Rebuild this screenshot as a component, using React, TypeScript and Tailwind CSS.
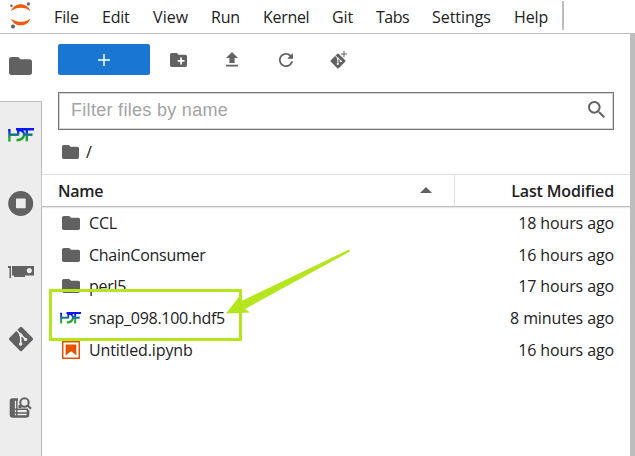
import React from 'react';

const menus = [
  { label: 'File', box: 'w-[48px]', text: 'tracking-[-0.1px]' },
  { label: 'Edit', box: 'w-[51px]', text: 'tracking-[-0.2px]' },
  { label: 'View', box: 'w-[58px]', text: 'tracking-[0.1px]' },
  { label: 'Run', box: 'w-[52px]', text: 'tracking-[-0.2px]' },
  { label: 'Kernel', box: 'w-[69px]', text: 'tracking-[-0.3px]' },
  { label: 'Git', box: 'w-[44px]', text: 'tracking-[-0.1px]' },
  { label: 'Tabs', box: 'w-[56px]', text: 'tracking-[-0.5px]' },
  { label: 'Settings', box: 'w-[82px]', text: 'tracking-[-0.05px]' },
  { label: 'Help', box: 'w-[48px]', text: 'tracking-[-0.1px]' },
];

const files = [
  { name: 'CCL', time: '18 hours ago', kind: 'folder', text: 'tracking-[-0.2px]' },
  { name: 'ChainConsumer', time: '16 hours ago', kind: 'folder', text: 'tracking-[-0.26px]' },
  { name: 'perl5', time: '17 hours ago', kind: 'folder', text: 'tracking-[-0.3px]' },
  { name: 'snap_098.100.hdf5', time: '8 minutes ago', kind: 'hdf', text: 'tracking-[-0.27px]' },
  { name: 'Untitled.ipynb', time: '16 hours ago', kind: 'notebook', text: 'tracking-[-0.12px]' },
];

function Folder({ className }: { className: string }) {
  return (
    <svg viewBox="2 4 20 16" preserveAspectRatio="none" className={className} fill="#616161">
      <path d="M10 4H4c-1.1 0-1.99.9-1.99 2L2 18c0 1.1.9 2 2 2h16c1.1 0 2-.9 2-2V8c0-1.1-.9-2-2-2h-8l-2-2z" />
    </svg>
  );
}

function Hdf({ className, id }: { className: string; id: string }) {
  return (
    <svg viewBox="0 0 26 14" preserveAspectRatio="none" className={className} fill="none" stroke={`url(#${id})`} strokeWidth="2.4">
      <defs>
        <linearGradient id={id} gradientUnits="userSpaceOnUse" x1="0" y1="0" x2="0" y2="14">
          <stop offset="0.15" stopColor="#0a14ff" />
          <stop offset="0.55" stopColor="#1b8a70" />
          <stop offset="0.8" stopColor="#22aa22" />
        </linearGradient>
      </defs>
      <path d="M1.4 1v12.500M1 6.800h9.500M10.200 1v6.500M8 1.200h18M10 2c4.500.200 6.300 2.200 6 5-.400 3-2.500 5-7.500 5.200M18.800 1.500V13.300M17 6.800h7.500" />
    </svg>
  );
}

function Git({ className, gap }: { className: string; gap: string }) {
  return (
    <svg viewBox="0 0 26 26" className={className}>
      <rect x="4" y="4" width="18" height="18" rx="1.500" transform="rotate(45 13 13)" fill="#616161" />
      <path d="M8.500 4l4.200 4.500V18M12.800 8.500l5 5" stroke={gap} strokeWidth="1.600" fill="none" />
      <circle cx="12.700" cy="9" r="1.700" fill={gap} />
      <circle cx="12.700" cy="18" r="1.700" fill={gap} />
      <circle cx="17.500" cy="13.400" r="1.700" fill={gap} />
    </svg>
  );
}

function Notebook() {
  return (
    <svg viewBox="1.800 1.800 18.400 18.400" className="h-[18px] w-[18px]" fill="#e65100">
      <path d="M18.700 3.300v15.400H3.300V3.300h15.400m1.500-1.500H1.800v18.400h18.400z" />
      <path d="M16.500 16.500l-5.400-4.300-5.600 4.300v-11h11z" />
    </svg>
  );
}

export default function App() {
  return (
    <div className="relative flex h-[456px] w-[635px] flex-col overflow-hidden bg-white font-['Open_Sans','Noto_Sans',sans-serif] text-[16px] text-[#212121]">
      <header className="flex h-[34px] shrink-0 border-b border-[#bdbdbd]">
        <div className="w-[54px] shrink-0">
          <svg width="40" height="33" viewBox="0 0 40 33">
            <path d="M11 11.200C14 2 27.500 2 30.500 11.200 25 6.600 16.500 6.600 11 11.200z" fill="#f05a0a" />
            <path d="M11 18.400C14 27.600 27.500 27.600 30.500 18.400 25 23 16.500 23 11 18.400z" fill="#f05a0a" />
            <circle cx="11.400" cy="5.800" r="1.200" fill="#616161" />
            <circle cx="28.400" cy="3.900" r="1.600" fill="#616161" />
            <circle cx="13" cy="26.600" r="2" fill="#616161" />
          </svg>
        </div>
        {menus.map((m) => (
          <div key={m.label} className={`${m.box} shrink-0 pt-[5px] leading-6`}>
            <span className={m.text}>{m.label}</span>
          </div>
        ))}
        <div className="mt-px h-[29px] w-[2px] bg-[#bdbdbd]" />
      </header>

      <div className="flex min-h-0 flex-1">
        <aside className="flex w-[42px] shrink-0 flex-col">
          <div className="flex h-[67px] shrink-0 items-center pl-[9px]">
            <Folder className="mt-[-3px] h-[18px] w-[23px]" />
          </div>
          <div className="flex flex-1 flex-col border-t border-r border-[#bdbdbd] bg-[#ededed]">
            <div className="flex h-[67px] items-center pl-2">
              <Hdf className="mt-[-2px] h-[14px] w-[26px]" id="hdf-side" />
            </div>
            <div className="flex h-[68px] items-center pl-2">
              <svg width="26" height="26" viewBox="0 0 26 26" className="mt-[2px]">
                <circle cx="12.700" cy="12.500" r="12.500" fill="#616161" />
                <rect x="8" y="7.500" width="9.700" height="9.700" rx="0.600" fill="#ededed" />
              </svg>
            </div>
            <div className="flex h-[68px] items-center pl-2">
              <svg width="26" height="14" viewBox="0 0 26 14" className="mt-[2px]" fill="#616161">
                <path d="M0 1h3v12H1.500V3H0z" />
                <path fillRule="evenodd" d="M4 1h22v9.500H17V12H6v-1.500H4zM21.300 3a2.600 2.600 0 1 0 .01 0z" />
              </svg>
            </div>
            <div className="flex h-[68px] items-center pl-2">
              <Git className="h-[26px] w-[26px]" gap="#ededed" />
            </div>
            <div className="flex h-[68px] items-center pl-[9px]">
              <svg width="24" height="22" viewBox="0 0 24 22" fill="none" stroke="#616161" className="mt-[2px]">
                <path d="M9 2.500H3.500Q2 2.500 2 4V17.500Q2 19.500 4 19.500H17Q19 19.500 19 17.500V13" strokeWidth="2.600" />
                <path d="M4.500 3v16M9.500 9.500h3" strokeWidth="2.800" />
                <path d="M7.800 2v17M6 12.200h13M6 16h13" strokeWidth="1.400" />
                <circle cx="15.500" cy="5.500" r="4.200" strokeWidth="2" />
                <path d="M18.400 8.300l3.600 3.500" strokeWidth="2.200" />
              </svg>
            </div>
          </div>
        </aside>

        <main className="flex min-w-0 flex-1 flex-col">
          <div className="flex h-[58px] shrink-0 items-start pt-[10px] pl-4">
            <button className="flex h-[31px] w-[92px] items-center justify-center rounded-[2px] bg-[#1976d2]">
              <svg width="12" height="12" viewBox="0 0 12 12" stroke="#fff" strokeWidth="1.500"><path d="M6 0v12M0 6h12" /></svg>
            </button>
            <div className="flex h-[31px] w-[56px] items-center justify-center">
              <svg width="17" height="14" viewBox="2 4 20 16" preserveAspectRatio="none" fill="#616161">
                <path d="M20 6h-8l-2-2H4c-1.110 0-1.990.890-1.990 2L2 18c0 1.110.890 2 2 2h16c1.110 0 2-.890 2-2V8c0-1.110-.890-2-2-2zm-1 8h-3v3h-2v-3h-3v-2h3V9h2v3h3v2z" />
              </svg>
            </div>
            <div className="flex h-[31px] w-[52px] items-center justify-center">
              <svg width="12" height="14.500" viewBox="5 3 14 17" preserveAspectRatio="none" fill="#616161">
                <path d="M9 16h6v-6h4l-7-7-7 7h4zM5 18h14v2H5z" />
              </svg>
            </div>
            <div className="flex h-[31px] w-[56px] items-center justify-center">
              <svg width="14" height="14" viewBox="3 3 12 12" fill="#616161">
                <path d="M9 13.500c-2.490 0-4.500-2.010-4.500-4.500S6.510 4.500 9 4.500c1.240 0 2.360.520 3.170 1.330L10 8h5V3l-1.760 1.760C12.150 3.680 10.660 3 9 3 5.690 3 3.010 5.690 3.010 9S5.690 15 9 15c2.970 0 5.430-2.160 5.900-5h-1.520c-.460 2-2.240 3.500-4.380 3.500z" />
              </svg>
            </div>
            <div className="flex h-[31px] w-[50px] items-center justify-center">
              <div className="relative mt-[3px] mr-[3px]">
                <Git className="h-[16px] w-[16px]" gap="#ffffff" />
                <svg width="6" height="6" viewBox="0 0 6 6" stroke="#616161" className="absolute -top-[2px] left-[11px]"><path d="M3 0v6M0 3h6" /></svg>
              </div>
            </div>
          </div>

          <div className="mr-[16px] ml-4 flex h-[38px] shrink-0 items-center justify-between border border-[#757575] pr-[8px] pl-[12px] shadow-[inset_0_0_0_1px_#d5d5d5]">
            <span className="mt-[-2px] font-['Liberation_Sans',Arial,sans-serif] text-[18px] tracking-[0.3px] text-[#a3a3a3]">Filter files by name</span>
            <svg width="17" height="17" viewBox="3 3 17.500 17.500" fill="#616161" className="mt-[-3px]">
              <path d="M15.500 14h-.790l-.280-.270A6.471 6.471 0 0 0 16 9.500 6.500 6.500 0 1 0 9.500 16c1.610 0 3.090-.590 4.230-1.570l.270.280v.790l5 4.990L20.490 19l-4.990-5zm-6 0C7.010 14 5 11.990 5 9.500S7.010 5 9.500 5 14 7.010 14 9.500 11.990 14 9.500 14z" />
            </svg>
          </div>
          <div className="flex h-[44px] shrink-0 items-center pl-[20px]">
            <Folder className="h-[14px] w-[17px]" />
            <span className="ml-[7px]">/</span>
          </div>
          <div className="flex h-[33px] shrink-0 border-t border-b border-t-[#e0e0e0] border-b-[#bdbdbd] font-semibold shadow-[0_1px_1px_#e8e8e8]">
            <div className="flex w-[412px] items-center justify-between pr-[22px] pl-4">
              <span className="tracking-[-0.300px]">Name</span>
              <svg width="12" height="6" viewBox="0 0 12 6" fill="#616161" className="mt-[-2px]"><path d="M0 6l6-6 6 6z" /></svg>
            </div>
            <div className="flex flex-1 items-center justify-end border-l border-[#e0e0e0] pr-[16px]">
              <span className="tracking-[-0.140px]">Last Modified</span>
            </div>
          </div>
          {files.map((f) => (
            <div key={f.name} className="flex h-[31.700px] shrink-0 items-center pr-[16px] pl-[17px]">
              <div className="flex w-[30px] shrink-0 items-center">
                {f.kind === 'folder' && <Folder className="ml-[2.500px] h-[14px] w-[18px]" />}
                {f.kind === 'hdf' && <Hdf className="ml-px h-[12px] w-[21px]" id="hdf-file" />}
                {f.kind === 'notebook' && <div className="ml-[3px]"><Notebook /></div>}
              </div>
              <span className={f.text}>{f.name}</span>
              <span className="ml-auto tracking-[-0.120px]">{f.time}</span>
            </div>
          ))}
        </main>
        <div className="w-[5px] shrink-0 bg-[#bdbdbd]" />
      </div>

      <div className="pointer-events-none absolute top-[289px] left-[49px] h-[52px] w-[193px] border-[3px] border-[#b5e61d]" />
      <svg className="pointer-events-none absolute top-[245px] left-[220px]" width="136" height="76" viewBox="220 245 136 76">
        <path d="M226 313.500L240 295.500L241.500 301L349 249.500L350 251.500L245 309L250 312.500z" fill="#b5e61d" />
      </svg>
    </div>
  );
}
